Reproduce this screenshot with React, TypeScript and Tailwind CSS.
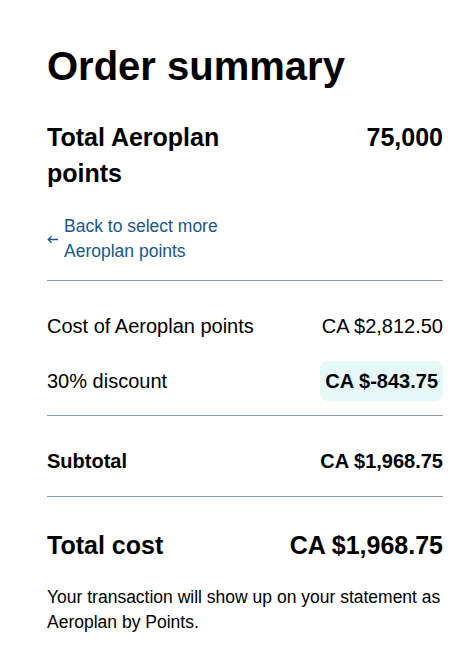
import React from "react";

export default function App() {
  return (
    <div className="min-h-screen bg-white text-black" style={{ fontFamily: '"Liberation Sans", Arial, sans-serif' }}>
      <div className="ml-[47px] w-[396px]">
        <h1 className="pt-[42px] text-[40px] font-bold leading-[48px]">Order summary</h1>

        <div className="mt-[29px] flex items-start justify-between text-[25px] font-bold leading-[36px]">
          <div className="w-[200px]">Total Aeroplan points</div>
          <div>75,000</div>
        </div>

        <a href="#" className="mt-[23px] flex items-center gap-[6px] text-[17.5px] leading-[25px] text-[#1a5785]">
          <svg width="11" height="9" viewBox="0 0 11 9" fill="none" className="shrink-0">
            <path d="M11 4.5H1.2M4.5 1.2L1.2 4.5L4.5 7.8" stroke="#1a5785" strokeWidth="1.3" />
          </svg>
          <span>
            Back to select more
            <br />
            Aeroplan points
          </span>
        </a>

        <div className="mt-[16px] h-px bg-[#8d9aae]" />

        <div className="mt-[31px] flex items-center justify-between text-[20px] leading-[28px]">
          <span>Cost of Aeroplan points</span>
          <span>CA $2,812.50</span>
        </div>

        <div className="mt-[21px] flex h-[40px] items-center justify-between text-[20px] leading-[28px]">
          <span>30% discount</span>
          <span className="flex h-[40px] items-center rounded-[8px] bg-[#e6f8f7] px-[5px] font-bold">CA $-843.75</span>
        </div>

        <div className="mt-[14px] h-px bg-[#8d9aae]" />

        <div className="mt-[31px] flex items-center justify-between text-[20px] font-bold leading-[28px]">
          <span>Subtotal</span>
          <span>CA $1,968.75</span>
        </div>

        <div className="mt-[21px] h-px bg-[#8d9aae]" />

        <div className="mt-[32px] flex items-center justify-between text-[25px] font-bold leading-[32px]">
          <span>Total cost</span>
          <span>CA $1,968.75</span>
        </div>

        <p className="mt-[24px] text-[17.5px] leading-[25px]">
          Your transaction will show up on your statement as Aeroplan by Points.
        </p>
      </div>
    </div>
  );
}
